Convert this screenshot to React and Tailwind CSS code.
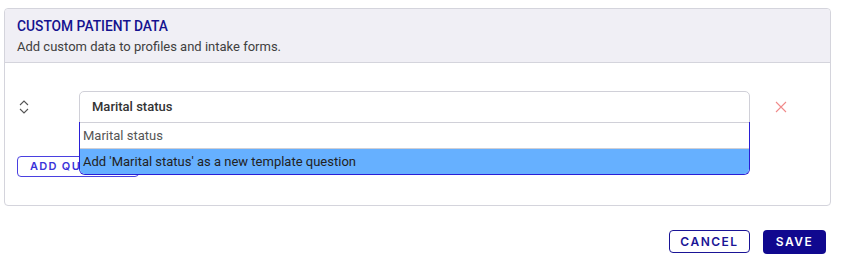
import React from "react";

export default function App() {
  return (
    <div className="w-[844px] h-[272px] bg-white pt-[8px] pl-[4px]" style={{ fontFamily: "Roboto, 'Noto Sans', sans-serif" }}>
      <div className="w-[827px] h-[198px] border border-[#d4d4dc] rounded-[4px] overflow-visible">
        <div className="h-[54px] bg-[#f0eff5] border-b border-[#d4d4dc] rounded-t-[4px] pl-[12px] pt-[8px]">
          <div className="text-[13.8px] leading-[18px] font-medium text-[#14128f]">CUSTOM PATIENT DATA</div>
          <div className="text-[13px] leading-[16px] mt-[4px] text-[#404040]">Add custom data to profiles and intake forms.</div>
        </div>
        <div className="pt-[28px] pl-[12px]">
          <div className="flex items-center h-[32px]">
            <svg width="12" height="16" viewBox="0 0 12 16" className="ml-[1px]">
              <path d="M2 6 L6 2 L10 6" fill="none" stroke="#555" strokeWidth="1.1" />
              <path d="M2 10 L6 14 L10 10" fill="none" stroke="#555" strokeWidth="1.1" />
            </svg>
            <div className="relative ml-[49px] w-[671px] h-[32px]">
              <div className="h-[32px] border border-[#d0d0d8] rounded-t-[5px] flex items-center pl-[12px] text-[13px] font-medium text-[#333]">
                Marital status
              </div>
              <div className="absolute left-0 top-[31px] w-[671px] bg-white border-x border-b border-[#2a1fd6] rounded-b-[6px] z-10 overflow-hidden">
                <div className="h-[26px] border-t border-[#d0d0d8] flex items-center pl-[3px] text-[13px] text-[#555]">Marital status</div>
                <div className="h-[26px] border-t border-[#cfcfd6] bg-[#66b0ff] flex items-center pl-[3px] text-[13px] text-[#222]">Add 'Marital status' as a new template question</div>
              </div>
            </div>
            <svg width="12" height="12" viewBox="0 0 12 12" className="ml-[25px]">
              <path d="M1 1 L11 11 M11 1 L1 11" stroke="#f08a8a" strokeWidth="1.1" />
            </svg>
          </div>
          <button className="mt-[33px] h-[21px] w-[122px] border border-[#4a40e0] rounded-[4px] text-left pl-[12px] text-[11px] font-semibold tracking-[1.3px] text-[#3b33d9]" style={{ fontFamily: "Inter, sans-serif" }}>
            ADD QUESTION
          </button>
        </div>
      </div>
      <div className="flex justify-end w-[822px] mt-[24px] gap-[13px]" style={{ fontFamily: "Inter, sans-serif" }}>
        <button className="h-[23px] w-[81px] border border-[#1a1496] rounded-[4px] text-[12px] font-semibold tracking-[1.5px] text-[#1a1496]">CANCEL</button>
        <button className="h-[24px] w-[63px] bg-[#10088f] rounded-[4px] text-[12px] font-semibold tracking-[1.5px] text-white">SAVE</button>
      </div>
    </div>
  );
}
